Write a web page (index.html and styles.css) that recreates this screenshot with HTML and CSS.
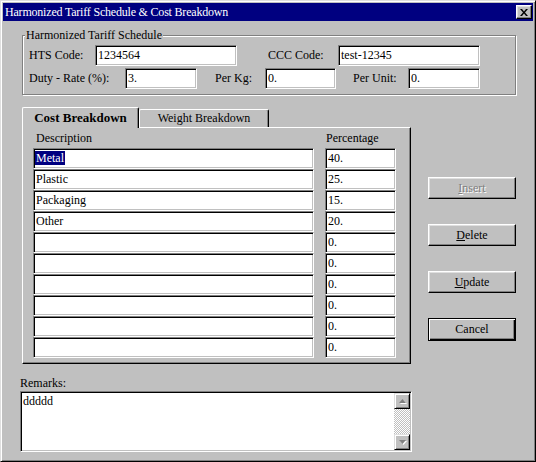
FILE: index.html
```html
<!DOCTYPE html>
<html lang="en">
  <head>
    <meta charset="UTF-8" />
    <title>Harmonized Tariff Schedule &amp; Cost Breakdown</title>
    <link rel="stylesheet" href="styles.css">
  </head>

  <body>
    <div class="window">
      <div class="titlebar">
        <span class="title">Harmonized Tariff Schedule &amp; Cost Breakdown</span>
        <div class="close">
          <svg width="8" height="7" viewBox="0 0 8 7">
            <path d="M0 0H2L4 2.4L6 0H8L5 3.5L8 7H6L4 4.6L2 7H0L3 3.5Z" fill="#000" />
          </svg>
        </div>
      </div>

      <div class="content">
        <div class="group">
          <span class="legend">Harmonized Tariff Schedule</span>
          <div class="row">
            <span class="lbl w-hts">HTS Code:</span>
            <div class="field w-code">1234564</div>
            <span class="lbl w-ccc">CCC Code:</span>
            <div class="field w-code">test-12345</div>
          </div>
          <div class="row">
            <span class="lbl w-duty">Duty - Rate (%):</span>
            <div class="field w-duty-in">3.</div>
            <span class="lbl w-kg">Per Kg:</span>
            <div class="field w-kg-in">0.</div>
            <span class="lbl w-unit">Per Unit:</span>
            <div class="field w-duty-in">0.</div>
          </div>
        </div>

        <div class="main">
          <div class="tabs-area">
            <div class="tabstrip">
              <div class="tab active">Cost Breakdown</div>
              <div class="tab">Weight Breakdown</div>
            </div>
            <div class="panel">
              <div class="grid" id="grid">
                <div class="hdr">Description</div>
                <div class="hdr hdr-pct">Percentage</div>
              </div>
            </div>
          </div>

          <div class="buttons">
            <div class="btn disabled"><u>I</u>nsert</div>
            <div class="btn"><u>D</u>elete</div>
            <div class="btn"><u>U</u>pdate</div>
            <div class="btn default">Cancel</div>
          </div>
        </div>

        <div class="remarks">
          <div class="remarks-lbl">Remarks:</div>
          <div class="memo">
            <div class="memo-text">ddddd</div>
            <div class="scrollbar">
              <div class="sb-btn">
                <svg width="7" height="4" viewBox="0 0 7 4"><path d="M3.5 0L7 4H0Z" fill="#808080" /></svg>
              </div>
              <div class="sb-track"></div>
              <div class="sb-btn">
                <svg width="7" height="4" viewBox="0 0 7 4"><path d="M0 0H7L3.5 4Z" fill="#808080" /></svg>
              </div>
            </div>
          </div>
        </div>
      </div>
    </div>

    <script>
      var rows = [
        ["Metal", "40."],
        ["Plastic", "25."],
        ["Packaging", "15."],
        ["Other", "20."],
        ["", "0."],
        ["", "0."],
        ["", "0."],
        ["", "0."],
        ["", "0."],
        ["", "0."]
      ];
      var grid = document.getElementById("grid");

      rows.forEach(function (r, i) {
        var desc = document.createElement("div");
        desc.className = "field cell";
        if (i === 0) {
          var sel = document.createElement("span");
          sel.className = "selected";
          sel.textContent = r[0];
          desc.appendChild(sel);
        } else {
          desc.textContent = r[0];
        }
        var pct = document.createElement("div");
        pct.className = "field cell";
        pct.textContent = r[1];
        grid.appendChild(desc);
        grid.appendChild(pct);
      });
    </script>
  </body>
</html>
```

FILE: styles.css
```css
* {
  box-sizing: border-box;
}

body {
  margin: 0;
  font-family: "Liberation Serif", "Times New Roman", serif;
  font-size: 12px;
  color: #000;
  background-color: #c0c0c0;
}

.window {
  width: 536px;
  height: 462px;
  overflow: hidden;
  background-color: #c0c0c0;
  border: 1px solid;
  border-color: #dfdfdf #000 #000 #dfdfdf;
  box-shadow: inset 1px 1px #fff, inset -1px -1px #808080;
  padding: 2px;
}

.titlebar {
  height: 18px;
  background-color: #000080;
  color: #fff;
  display: flex;
  align-items: center;
  padding: 0 1px 0 2px;
}

.title {
  flex: 1;
  line-height: 18px;
  white-space: nowrap;
  letter-spacing: -0.2px;
}

.close {
  width: 16px;
  height: 14px;
  background-color: #c0c0c0;
  border: 1px solid;
  border-color: #fff #000 #000 #fff;
  box-shadow: inset -1px -1px #808080, inset 1px 1px #dfdfdf;
  display: flex;
  align-items: center;
  justify-content: center;
}

.content {
  padding: 0 17px 0 19px;
}

/* group box */
.group {
  position: relative;
  margin-top: 14px;
  border: 1px solid #808080;
  box-shadow: inset 1px 1px #fff, 1px 1px #fff;
  padding: 9px 0 5px 6px;
  display: flex;
  flex-direction: column;
  gap: 2px;
}

.legend {
  position: absolute;
  top: -8px;
  left: 2px;
  padding: 0 1px;
  line-height: 14px;
  background-color: #c0c0c0;
}

.row {
  display: flex;
  align-items: center;
  height: 21px;
}

.lbl {
  white-space: nowrap;
}

.w-hts { width: 66px; }
.w-ccc { width: 70px; margin-left: 31px; }
.w-duty { width: 96px; }
.w-kg { width: 50px; margin-left: 18px; }
.w-unit { width: 55px; margin-left: 17px; }

.field {
  height: 21px;
  background-color: #fff;
  border: 1px solid;
  border-color: #808080 #fff #fff #808080;
  box-shadow: inset 1px 1px #000, inset -1px -1px #c0c0c0;
  padding-left: 2px;
  line-height: 19px;
  white-space: nowrap;
  overflow: hidden;
}

.w-code { width: 142px; }
.w-duty-in { width: 72px; }
.w-kg-in { width: 71px; }

/* tabs */
.main {
  display: flex;
  margin-top: 12px;
}

.tabs-area {
  width: 389px;
}

.tabstrip {
  display: flex;
  align-items: flex-end;
  height: 20px;
}

.tab {
  height: 18px;
  width: 130px;
  border: 1px solid;
  border-bottom: none;
  border-color: #fff #000 #000 #fff;
  box-shadow: inset -1px 0 #808080;
  border-radius: 2px 2px 0 0;
  text-align: center;
  line-height: 17px;
  position: relative;
}

.tab.active {
  width: 117px;
  height: 21px;
  margin-bottom: -1px;
  z-index: 1;
  background-color: #c0c0c0;
  font-weight: bold;
  font-size: 13px;
  line-height: 20px;
}

.panel {
  height: 237px;
  border: 1px solid;
  border-color: #fff #000 #000 #fff;
  box-shadow: inset -1px -1px #808080;
  padding: 3px 0 0 10px;
}

.grid {
  display: grid;
  grid-template-columns: 281px 71px;
  grid-auto-rows: 21px;
  grid-template-rows: 17px;
  column-gap: 11px;
}

.hdr {
  padding-left: 3px;
  line-height: 14px;
}

.hdr-pct {
  padding-left: 1px;
}

.selected {
  background-color: #000080;
  color: #fff;
  padding: 0 1px;
  margin-left: -1px;
}

/* buttons */
.buttons {
  margin-left: 17px;
  padding-top: 70px;
  display: flex;
  flex-direction: column;
  gap: 25px;
}

.btn {
  width: 88px;
  height: 22px;
  background-color: #c0c0c0;
  border: 1px solid;
  border-color: #fff #000 #000 #fff;
  box-shadow: inset -1px -1px #808080, inset 1px 1px #dfdfdf;
  text-align: center;
  line-height: 20px;
}

.btn.disabled {
  color: #808080;
  text-shadow: 1px 1px #fff;
}

.btn.disabled u {
  text-decoration-color: #808080;
}

.btn.default {
  height: 23px;
  border-color: #000;
  box-shadow: inset 1px 1px #fff, inset -1px -1px #000, inset -2px -2px #808080;
}

/* remarks */
.remarks {
  margin-left: -2px;
  margin-top: 12px;
}

.remarks-lbl {
  line-height: 14px;
  margin-bottom: 1px;
}

.memo {
  width: 392px;
  height: 61px;
  display: flex;
  background-color: #fff;
  border: 1px solid;
  border-color: #808080 #fff #fff #808080;
  box-shadow: inset 1px 1px #000, inset -1px -1px #c0c0c0;
  padding: 1px;
}

.memo-text {
  flex: 1;
  padding: 1px 1px;
  line-height: 14px;
}

.scrollbar {
  width: 16px;
  display: flex;
  flex-direction: column;
}

.sb-btn {
  height: 16px;
  background-color: #c0c0c0;
  border: 1px solid;
  border-color: #dfdfdf #000 #000 #dfdfdf;
  box-shadow: inset 1px 1px #fff, inset -1px -1px #808080;
  display: flex;
  align-items: center;
  justify-content: center;
}

.sb-btn svg {
  filter: drop-shadow(1px 1px 0 #fff);
}

.sb-track {
  flex: 1;
  background: repeating-conic-gradient(#fff 0 25%, #c0c0c0 0 50%) 0 0 / 2px 2px;
}
```
